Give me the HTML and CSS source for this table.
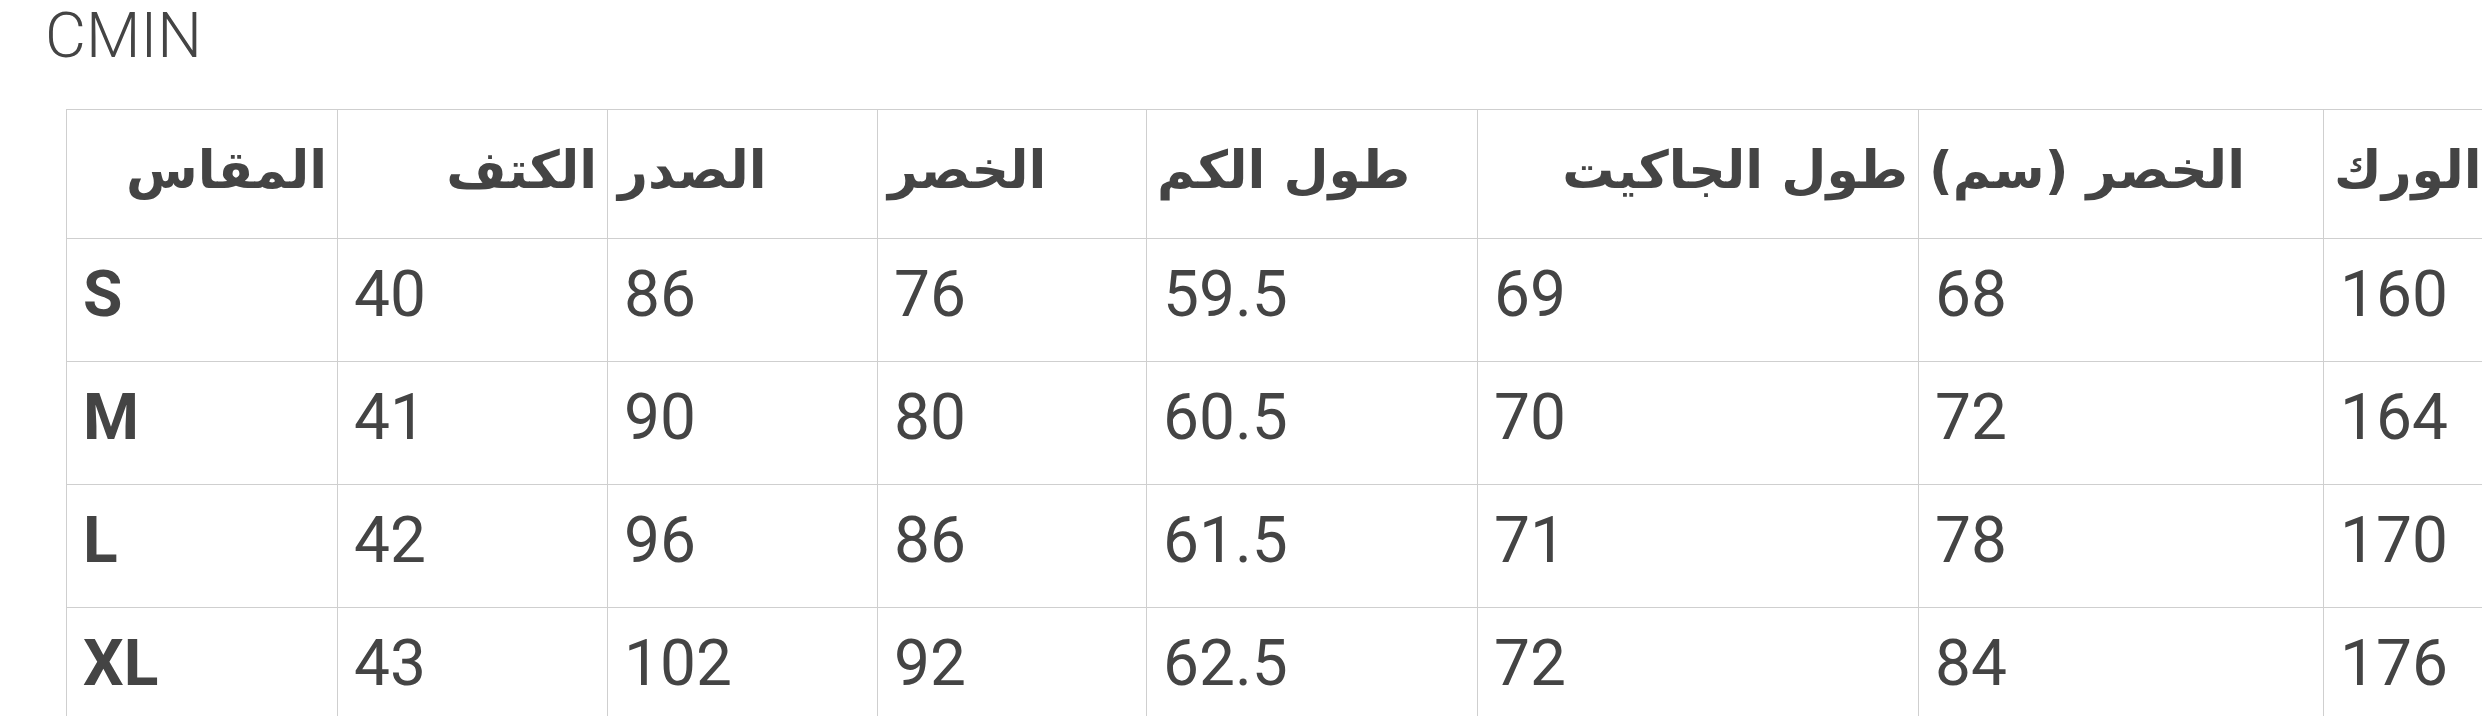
FILE: index.html
```html
<!DOCTYPE html>
<html lang="ar">
<head>
<meta charset="utf-8">
<title>CMIN</title>
<link rel="stylesheet" href="styles.css">
</head>
<body>
<div class="page">
  <h1 class="brand" dir="ltr">CMIN</h1>
  <div class="table-wrap" dir="ltr">
    <table class="size-table">
      <colgroup>
        <col class="c1"><col class="c2"><col class="c3"><col class="c4"><col class="c5"><col class="c6"><col class="c7"><col class="c8">
      </colgroup>
      <thead>
        <tr>
          <th class="h-r h1">المقاس</th>
          <th class="h-r h2">الكتف</th>
          <th class="h-l h3">الصدر</th>
          <th class="h-l h4">الخصر</th>
          <th class="h-l h5">طول الكم</th>
          <th class="h-r h6">طول الجاكيت</th>
          <th class="h-l h7">الخصر (سم)</th>
          <th class="h-l h8">الورك</th>
        </tr>
      </thead>
      <tbody>
        <tr><td class="size">S</td><td>40</td><td>86</td><td>76</td><td>59.5</td><td>69</td><td>68</td><td>160</td></tr>
        <tr><td class="size">M</td><td>41</td><td>90</td><td>80</td><td>60.5</td><td>70</td><td>72</td><td>164</td></tr>
        <tr><td class="size">L</td><td>42</td><td>96</td><td>86</td><td>61.5</td><td>71</td><td>78</td><td>170</td></tr>
        <tr><td class="size">XL</td><td>43</td><td>102</td><td>92</td><td>62.5</td><td>72</td><td>84</td><td>176</td></tr>
      </tbody>
    </table>
  </div>
</div>
</body>
</html>
```

FILE: styles.css
```css
html, body {
  margin: 0;
  padding: 0;
  background: #ffffff;
  overflow: hidden;
}

.page {
  width: 2482px;
  height: 716px;
  overflow: hidden;
  font-family: Roboto, "DejaVu Sans", sans-serif;
  color: #444444;
}

.brand {
  margin: 0;
  padding-left: 45px;
  font-size: 63px;
  line-height: 72px;
  font-weight: 300;
  color: #444444;
}

.table-wrap {
  padding-top: 37px;
  padding-left: 66px;
}

.size-table {
  border-collapse: collapse;
  table-layout: fixed;
  width: 2616px;
  border: 1px solid #cfcfcf;
}

.c1 { width: 271px; }
.c2 { width: 270px; }
.c3 { width: 270px; }
.c4 { width: 269px; }
.c5 { width: 331px; }
.c6 { width: 441px; }
.c7 { width: 405px; }
.c8 { width: 359px; }

.size-table th,
.size-table td {
  border: 1px solid #cfcfcf;
  white-space: nowrap;
  overflow: visible;
}

.size-table thead tr {
  height: 129px;
}

.size-table th {
  font-family: "DejaVu Sans", Roboto, sans-serif;
  font-weight: bold;
  font-size: 52px;
  line-height: 80px;
  padding: 0 10px 8px;
  vertical-align: middle;
  color: #444444;
}

.h-r { text-align: right; }
.h-l { text-align: left; }
.h1 { padding-right: 20px; }
.h2 { padding-right: 27px; }
.h5 { padding-left: 14px; }
.h6 { padding-right: 21px; }
.h8 { padding-left: 12px; }

.size-table tbody tr {
  height: 123px;
}

.size-table td {
  font-size: 64px;
  line-height: 80px;
  padding: 0 16px 10px;
  vertical-align: middle;
  text-align: left;
}

.size-table td.size {
  font-weight: bold;
}
```
